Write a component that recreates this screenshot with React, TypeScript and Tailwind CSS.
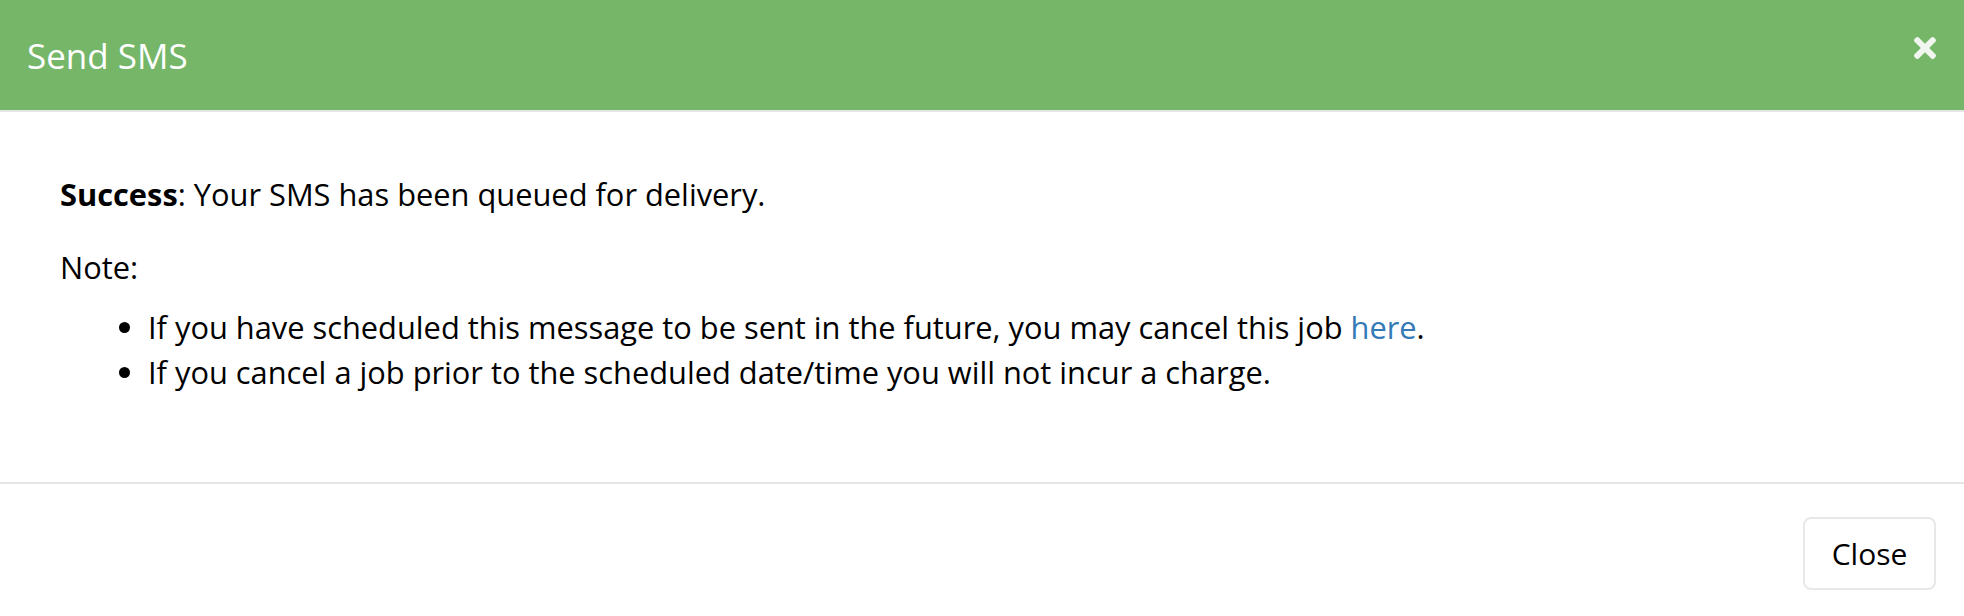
import { FaTimes } from "react-icons/fa";

const App = () => {
  return (
    <div className="w-[1964px] h-[616px] bg-white flex flex-col font-['Open_Sans',sans-serif] text-black">
      {/* Header */}
      <div className="h-[112px] flex-shrink-0 bg-[#75b669] border-b-2 border-[#e5e5e5] flex items-center justify-between pl-[27px] pr-[29px]">
        <h4 className="text-[35px] leading-none text-white font-normal">Send SMS</h4>
        <button type="button" aria-label="Close" className="text-white opacity-90 -mt-[15px] -mr-[6px]">
          <FaTimes size={32} />
        </button>
      </div>

      {/* Body */}
      <div className="flex-1 pl-[60px] pt-[60px] text-[30.8px] leading-[45px] border-b-2 border-[#e5e5e5]">
        <p>
          <strong className="font-bold">Success</strong>: Your SMS has been queued for delivery.
        </p>
        <p className="mt-[28px]">Note:</p>
        <ul className="mt-[15px] list-disc pl-[88px]">
          <li>
            If you have scheduled this message to be sent in the future, you may cancel this job{" "}
            <a href="#" className="text-[#337ab7]">here</a>.
          </li>
          <li>If you cancel a job prior to the scheduled date/time you will not incur a charge.</li>
        </ul>
      </div>

      {/* Footer */}
      <div className="h-[132px] flex-shrink-0 flex justify-end items-start pt-[33px] pr-[28px]">
        <button
          type="button"
          className="w-[133px] h-[73px] border-2 border-[#e8e8e8] rounded-[8px] bg-white text-[30px] leading-none text-black"
        >
          Close
        </button>
      </div>
    </div>
  );
};

export default App;
